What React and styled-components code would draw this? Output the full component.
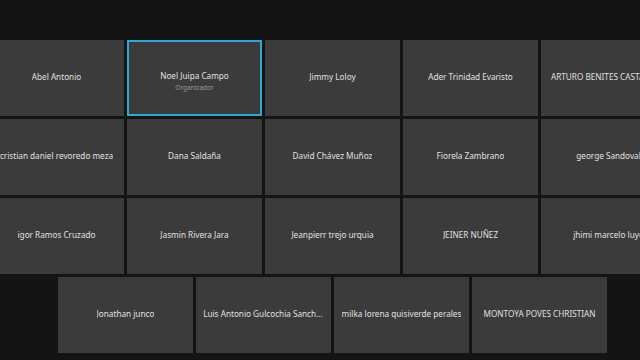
import React from "react";
import styled, { createGlobalStyle } from "styled-components";

const Global = createGlobalStyle`
  html, body { margin: 0; padding: 0; background: #141414; overflow: hidden; }
  body { width: 640px; height: 360px; font-family: "Noto Sans", "Open Sans", sans-serif; }
`;

const Stage = styled.div`
  width: 640px;
  height: 360px;
  overflow: hidden;
  background: #141414;
  padding-top: 40px;
  box-sizing: border-box;
`;

const Grid = styled.div`
  width: 687px;
  margin-left: -11px;
  display: flex;
  flex-direction: column;
  gap: 3px;
`;

const Row = styled.div`
  display: flex;
  justify-content: center;
  gap: 3px;
`;

const Tile = styled.div`
  width: 135px;
  height: 76px;
  flex: 0 0 135px;
  background: #3b3b3b;
  display: flex;
  flex-direction: column;
  align-items: center;
  justify-content: center;
  box-sizing: border-box;
  padding: ${(p) => (p.$hasRole ? "9px 0 3px" : "0 0 3px")};
  border: ${(p) => (p.$active ? "2px solid #2aa9d6" : "none")};
`;

const Name = styled.div`
  max-width: 120.7px;
  color: #e0e0e0;
  font-size: 8.2px;
  line-height: 11px;
  white-space: nowrap;
  overflow: hidden;
  text-overflow: ellipsis;
`;

const Role = styled.div`
  color: #9a9a9a;
  font-size: 6.5px;
  line-height: 9px;
  margin-top: 2px;
`;

const rows = [
  [
    { n: "Abel Antonio" },
    { n: "Noel Juipa Campo", r: "Organizador", a: true },
    { n: "Jimmy Loloy" },
    { n: "Ader Trinidad Evaristo" },
    { n: "ARTURO BENITES CASTAÑEDA" },
  ],
  [
    { n: "cristian daniel revoredo meza" },
    { n: "Dana Saldaña" },
    { n: "David Chávez Muñoz" },
    { n: "Fiorela Zambrano" },
    { n: "george Sandoval" },
  ],
  [
    { n: "igor Ramos Cruzado" },
    { n: "Jasmin Rivera Jara" },
    { n: "Jeanpierr trejo urquia" },
    { n: "JEINER NUÑEZ" },
    { n: "jhimi marcelo luyo" },
  ],
  [
    { n: "Jonathan junco" },
    { n: "Luis Antonio Gulcochia Sanchez" },
    { n: "milka lorena quisiverde perales" },
    { n: "MONTOYA POVES CHRISTIAN" },
  ],
];

export default function App() {
  return (
    <>
      <Global />
      <Stage>
        <Grid>
          {rows.map((row, i) => (
            <Row key={i}>
              {row.map((t) => (
                <Tile key={t.n} $active={t.a} $hasRole={!!t.r}>
                  <Name>{t.n}</Name>
                  {t.r && <Role>{t.r}</Role>}
                </Tile>
              ))}
            </Row>
          ))}
        </Grid>
      </Stage>
    </>
  );
}
